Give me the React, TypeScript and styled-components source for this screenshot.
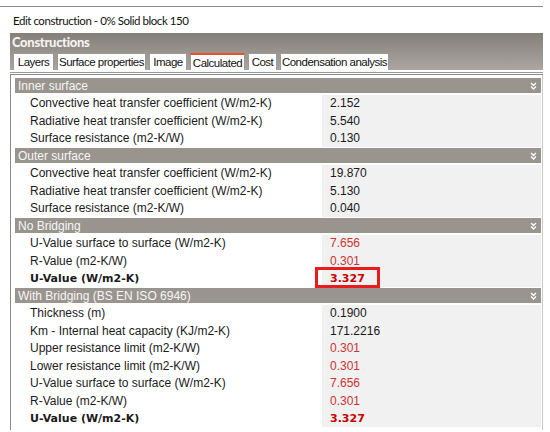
import React from "react";
import styled, { createGlobalStyle } from "styled-components";

const GlobalStyle = createGlobalStyle`
  html, body {
    margin: 0;
    padding: 0;
    background: #ffffff;
  }
  body {
    width: 550px;
    height: 432px;
    overflow: hidden;
  }
`;

const StyledPage = styled.div`
  width: 550px;
  height: 432px;
  overflow: hidden;
  padding-top: 6px;
  box-sizing: border-box;
`;

const StyledTopLine = styled.div`
  width: 543px;
  height: 1px;
  background: #8c8c8c;
`;

const StyledTitle = styled.div`
  height: 26px;
  padding-left: 13px;
  display: flex;
  align-items: center;
  font-family: Lato, "Liberation Sans", sans-serif;
  font-size: 11.5px;
  letter-spacing: -0.45px;
  color: #111;
`;

const StyledWindow = styled.div`
  margin-left: 10px;
  width: 533px;
`;

const StyledHeaderBar = styled.div`
  height: 37px;
  background: linear-gradient(#857f79, #aba6a1);
  display: flex;
  flex-direction: column;
  justify-content: space-between;
`;

const StyledHeaderText = styled.div`
  padding: 1px 0 0 2px;
  font-family: Lato, "Liberation Sans", sans-serif;
  font-weight: 900;
  font-size: 13px;
  letter-spacing: -0.3px;
  color: #f4f2f0;
`;

const StyledTabRow = styled.div`
  display: flex;
  align-items: flex-end;
  gap: 3px;
  padding-left: 3px;
`;

const StyledTab = styled.div<{ $active?: boolean; $width: number }>`
  width: ${(p) => p.$width}px;
  height: 17px;
  box-sizing: border-box;
  background: #ffffff;
  border-left: 1px solid #9a9a9a;
  border-right: 1px solid #9a9a9a;
  border-top: ${(p) => (p.$active ? "2px solid #e8502a" : "1px solid #9a9a9a")};
  display: flex;
  align-items: center;
  justify-content: center;
  font-family: "Liberation Sans", Arial, sans-serif;
  font-size: 11.5px;
  letter-spacing: -0.5px;
  color: #111;
`;

const StyledRule = styled.div`
  height: 5px;
  border-top: 1px solid #ffffff;
  border-bottom: 1px solid #8a8a8a;
  background: #ffffff;
  box-sizing: border-box;
  position: relative;
  &::before {
    content: "";
    position: absolute;
    left: 0;
    right: 0;
    top: 1px;
    height: 1px;
    background: #9a9a9a;
  }
`;

const StyledPanel = styled.div`
  border-left: 1px solid #8a8a8a;
  border-right: 1px solid #c8c8c8;
  height: 355px;
  padding: 2px 1px 0 4px;
  box-sizing: border-box;
  overflow: hidden;
`;

const StyledSectionHeader = styled.div`
  height: 15px;
  margin: 1px 0 1.5px;
  background: #9a948e;
  display: flex;
  align-items: center;
  justify-content: space-between;
  padding: 0 4px 0 3px;
  font-family: "Liberation Sans", Tahoma, sans-serif;
  font-size: 12px;
  color: #f6f6f6;
`;

const StyledRow = styled.div`
  height: 17.5px;
  display: grid;
  grid-template-columns: 307px 1fr;
`;

const StyledLabel = styled.div<{ $bold?: boolean }>`
  background: #ffffff;
  padding-left: 15px;
  display: flex;
  align-items: center;
  font-family: ${(p) => (p.$bold ? '"DejaVu Sans", Verdana, sans-serif' : '"Liberation Sans", Tahoma, sans-serif')};
  font-weight: ${(p) => (p.$bold ? "bold" : "normal")};
  font-size: ${(p) => (p.$bold ? "11px" : "12px")};
  color: #1a1a1a;
  white-space: nowrap;
`;

const StyledValue = styled.div<{ $red?: boolean; $bold?: boolean }>`
  background: #f1f1f1;
  padding-left: 8px;
  display: flex;
  align-items: center;
  font-family: ${(p) => (p.$bold ? '"DejaVu Sans", Verdana, sans-serif' : '"Liberation Sans", Tahoma, sans-serif')};
  font-weight: ${(p) => (p.$bold ? "bold" : "normal")};
  font-size: ${(p) => (p.$bold ? "11px" : "12px")};
  color: ${(p) => (p.$bold ? "#c80000" : p.$red ? "#cc3333" : "#1a1a1a")};
`;

const StyledValueText = styled.span<{ $boxed?: boolean }>`
  position: relative;
  &::after {
    content: "";
    display: ${(p) => (p.$boxed ? "block" : "none")};
    position: absolute;
    left: -15px;
    top: -5px;
    width: 65px;
    height: 21px;
    box-sizing: border-box;
    border: 3px solid #e81c1c;
  }
`;

type Item = {
  label: string;
  value: string;
  red?: boolean;
  bold?: boolean;
  boxed?: boolean;
};

type Section = {
  title: string;
  items: Item[];
};

const sections: Section[] = [
  {
    title: "Inner surface",
    items: [
      { label: "Convective heat transfer coefficient (W/m2-K)", value: "2.152" },
      { label: "Radiative heat transfer coefficient (W/m2-K)", value: "5.540" },
      { label: "Surface resistance (m2-K/W)", value: "0.130" },
    ],
  },
  {
    title: "Outer surface",
    items: [
      { label: "Convective heat transfer coefficient (W/m2-K)", value: "19.870" },
      { label: "Radiative heat transfer coefficient (W/m2-K)", value: "5.130" },
      { label: "Surface resistance (m2-K/W)", value: "0.040" },
    ],
  },
  {
    title: "No Bridging",
    items: [
      { label: "U-Value surface to surface (W/m2-K)", value: "7.656", red: true },
      { label: "R-Value (m2-K/W)", value: "0.301", red: true },
      { label: "U-Value (W/m2-K)", value: "3.327", bold: true, boxed: true },
    ],
  },
  {
    title: "With Bridging (BS EN ISO 6946)",
    items: [
      { label: "Thickness (m)", value: "0.1900" },
      { label: "Km - Internal heat capacity (KJ/m2-K)", value: "171.2216" },
      { label: "Upper resistance limit (m2-K/W)", value: "0.301", red: true },
      { label: "Lower resistance limit (m2-K/W)", value: "0.301", red: true },
      { label: "U-Value surface to surface (W/m2-K)", value: "7.656", red: true },
      { label: "R-Value (m2-K/W)", value: "0.301", red: true },
      { label: "U-Value (W/m2-K)", value: "3.327", bold: true },
    ],
  },
];

const tabs = [
  { name: "Layers", width: 41 },
  { name: "Surface properties", width: 89 },
  { name: "Image", width: 38 },
  { name: "Calculated", width: 55 },
  { name: "Cost", width: 29 },
  { name: "Condensation analysis", width: 109 },
];

const CollapseIcon = (): JSX.Element => (
  <svg width="7" height="8" viewBox="0 0 7 8">
    <path d="M1 1 L3.5 3.5 L6 1 M1 4.5 L3.5 7 L6 4.5" stroke="#ffffff" strokeWidth="1.3" fill="none" />
  </svg>
);

const App = (): JSX.Element => {
  return (
    <React.Fragment>
      <GlobalStyle />
      <StyledPage>
        <StyledTopLine />
        <StyledTitle>Edit construction - 0% Solid block 150</StyledTitle>
        <StyledWindow>
          <StyledHeaderBar>
            <StyledHeaderText>Constructions</StyledHeaderText>
            <StyledTabRow>
              {tabs.map((tab) => (
                <StyledTab key={tab.name} $width={tab.width} $active={tab.name === "Calculated"}>
                  {tab.name}
                </StyledTab>
              ))}
            </StyledTabRow>
          </StyledHeaderBar>
          <StyledRule />
          <StyledPanel>
            {sections.map((section) => (
              <React.Fragment key={section.title}>
                <StyledSectionHeader>
                  <span>{section.title}</span>
                  <CollapseIcon />
                </StyledSectionHeader>
                {section.items.map((item, i) => (
                  <StyledRow key={i}>
                    <StyledLabel $bold={item.bold}>{item.label}</StyledLabel>
                    <StyledValue $red={item.red} $bold={item.bold}>
                      <StyledValueText $boxed={item.boxed}>{item.value}</StyledValueText>
                    </StyledValue>
                  </StyledRow>
                ))}
              </React.Fragment>
            ))}
          </StyledPanel>
        </StyledWindow>
      </StyledPage>
    </React.Fragment>
  );
};

export default App;
